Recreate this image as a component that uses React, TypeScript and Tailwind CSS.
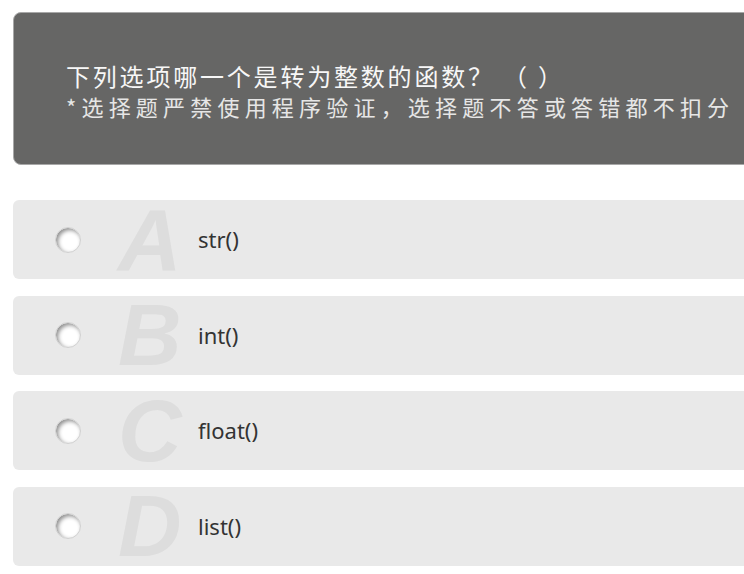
import React from "react";

const options = [
  { letter: "A", text: "str()" },
  { letter: "B", text: "int()" },
  { letter: "C", text: "float()" },
  { letter: "D", text: "list()" },
];

export default function App() {
  return (
    <div className="w-[744px] h-[574px] overflow-hidden bg-white">
      <div className="w-[780px] pl-[13px] pt-[12px] flex flex-col">
        <div
          className="h-[153px] rounded-[8px] bg-[#666665] border border-[#a8a8a8] pl-[52px] pt-[48px] flex flex-col"
          style={{ fontFamily: '"Noto Sans CJK SC", sans-serif' }}
        >
          <div className="text-[24px] leading-[30px] tracking-[2.8px] text-[#f7f7f7] whitespace-nowrap">
            下列选项哪一个是转为整数的函数？ （ ）
          </div>
          <div className="text-[22px] leading-[31px] tracking-[5.2px] text-[#e6e6e6] whitespace-nowrap">
            *选择题严禁使用程序验证，选择题不答或答错都不扣分
          </div>
        </div>
        <div className="mt-[35px] flex flex-col gap-[16.5px]">
          {options.map((o) => (
            <div
              key={o.letter}
              className="h-[79px] rounded-[6px] bg-[#e9e9e9] flex items-center"
            >
              <div className="ml-[42px] w-[26px] h-[26px] rounded-full bg-white shadow-[inset_2px_2px_4px_rgba(0,0,0,0.45)] border border-[#d0d0d0]" />
              <div
                className="ml-[37px] w-[60px] text-center text-[88px] leading-none font-bold italic text-[#dddddd] select-none"
                style={{ fontFamily: '"Liberation Sans", Arial, sans-serif' }}
              >
                {o.letter}
              </div>
              <div
                className="ml-[20px] text-[22px] text-[#333333]"
                style={{ fontFamily: '"Noto Sans", "Noto Sans CJK SC", sans-serif' }}
              >
                {o.text}
              </div>
            </div>
          ))}
        </div>
      </div>
    </div>
  );
}
